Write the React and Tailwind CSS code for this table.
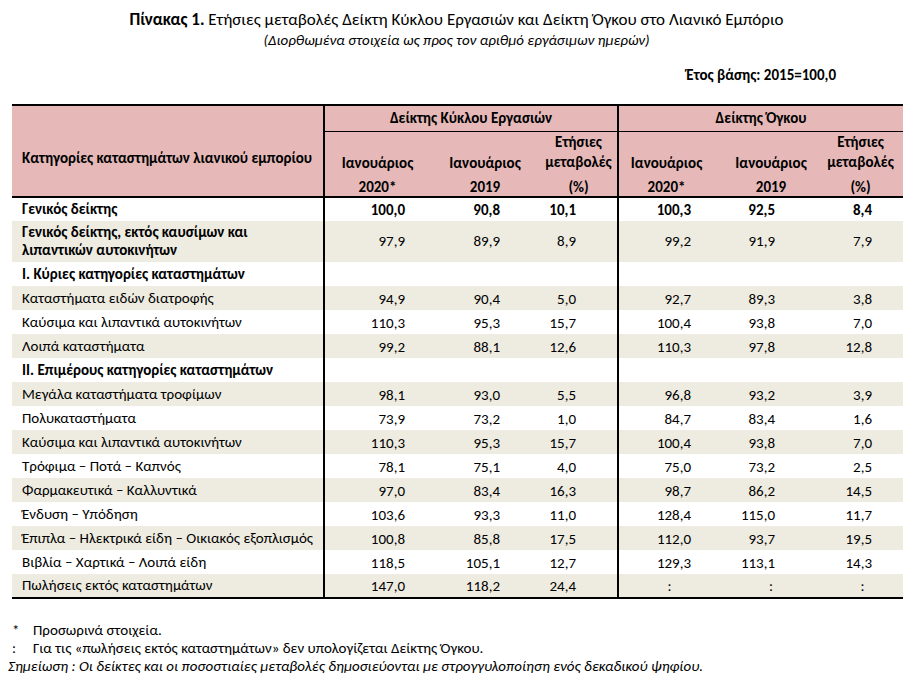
import React from "react";

const rows = [
  { label: "Γενικός δείκτης", bold: true, v: ["100,0", "90,8", "10,1", "100,3", "92,5", "8,4"] },
  {
    label: ["Γενικός δείκτης, εκτός καυσίμων και", "λιπαντικών αυτοκινήτων"],
    bold: true,
    boldValues: false,
    tall: true,
    v: ["97,9", "89,9", "8,9", "99,2", "91,9", "7,9"],
  },
  { label: "I. Κύριες κατηγορίες καταστημάτων", bold: true, v: null },
  { label: "Καταστήματα ειδών διατροφής", v: ["94,9", "90,4", "5,0", "92,7", "89,3", "3,8"] },
  { label: "Καύσιμα και λιπαντικά αυτοκινήτων", v: ["110,3", "95,3", "15,7", "100,4", "93,8", "7,0"] },
  { label: "Λοιπά καταστήματα", v: ["99,2", "88,1", "12,6", "110,3", "97,8", "12,8"] },
  { label: "II. Επιμέρους κατηγορίες καταστημάτων", bold: true, v: null },
  { label: "Μεγάλα καταστήματα τροφίμων", v: ["98,1", "93,0", "5,5", "96,8", "93,2", "3,9"] },
  { label: "Πολυκαταστήματα", v: ["73,9", "73,2", "1,0", "84,7", "83,4", "1,6"] },
  { label: "Καύσιμα και λιπαντικά αυτοκινήτων", v: ["110,3", "95,3", "15,7", "100,4", "93,8", "7,0"] },
  { label: "Τρόφιμα – Ποτά – Καπνός", v: ["78,1", "75,1", "4,0", "75,0", "73,2", "2,5"] },
  { label: "Φαρμακευτικά – Καλλυντικά", v: ["97,0", "83,4", "16,3", "98,7", "86,2", "14,5"] },
  { label: "Ένδυση – Υπόδηση", v: ["103,6", "93,3", "11,0", "128,4", "115,0", "11,7"] },
  { label: "Έπιπλα – Ηλεκτρικά είδη – Οικιακός εξοπλισμός", v: ["100,8", "85,8", "17,5", "112,0", "93,7", "19,5"] },
  { label: "Βιβλία – Χαρτικά – Λοιπά είδη", v: ["118,5", "105,1", "12,7", "129,3", "113,1", "14,3"] },
  { label: "Πωλήσεις εκτός καταστημάτων", v: ["147,0", "118,2", "24,4", ":", ":", ":"] },
];

// right padding for each value column, so numbers line up like the sheet
const valueCls = [
  "pr-[25px] border-l-2 border-black",
  "pr-[40px]",
  "pr-[41px]",
  "pr-[29px] border-l-2 border-black",
  "pr-[47px]",
  "pr-[31px]",
];

const Row = ({ row, i }) => {
  const bg = i % 2 === 1 ? "bg-[#eeece1]" : "bg-white";
  const valBold = row.bold && row.boldValues !== false;
  return (
    <tr className={`${bg} ${row.tall ? "h-[41px]" : "h-[24px]"}`}>
      <td className={`pl-[10px] align-middle ${row.bold ? "font-bold" : ""}`}>
        {Array.isArray(row.label) ? (
          <>
            {row.label[0]}
            <br />
            {row.label[1]}
          </>
        ) : (
          row.label
        )}
      </td>
      {valueCls.map((c, j) => {
        const val = row.v ? row.v[j] : "";
        const colon = val === ":";
        return (
          <td
            key={j}
            className={`${c} ${row.tall ? "align-middle" : "align-bottom pb-[2px]"} ${
              colon ? "text-center !pr-0" : "text-right"
            } ${valBold ? "font-bold" : ""}`}
          >
            {val}
          </td>
        );
      })}
    </tr>
  );
};

export default function App() {
  return (
    <div className="w-[913px] h-[685px] bg-white text-black font-[Carlito,Lato,'Noto_Sans',sans-serif] overflow-hidden">
      <div className="pt-[10px] text-center text-[17px] leading-[20px]">
        <span className="font-bold">Πίνακας 1.</span> Ετήσιες μεταβολές Δείκτη Κύκλου Εργασιών και Δείκτη Όγκου
        στο Λιανικό Εμπόριο
      </div>
      <div className="mt-[1px] text-center italic text-[15px] leading-[18px]">
        (Διορθωμένα στοιχεία ως προς τον αριθμό εργάσιμων ημερών)
      </div>
      <div className="mt-[17px] pr-[77px] text-right font-bold text-[15px] leading-[18px]">
        Έτος βάσης: 2015=100,0
      </div>

      <table className="ml-[12px] mt-[20px] w-[891px] table-fixed border-collapse text-[15px] leading-[18px] border-t-2 border-b-2 border-black">
        <colgroup>
          <col className="w-[312px]" />
          <col className="w-[106px]" />
          <col className="w-[110px]" />
          <col className="w-[78px]" />
          <col className="w-[102px]" />
          <col className="w-[102px]" />
          <col className="w-[81px]" />
        </colgroup>
        <thead className="bg-[#e6b9b8] font-bold">
          <tr className="h-[26px]">
            <td rowSpan={3} className="pl-[10px] pt-[14px] align-middle border-b-2 border-black">
              Κατηγορίες καταστημάτων λιανικού εμπορίου
            </td>
            <td colSpan={3} className="text-center align-middle border-l-2 border-b border-black">
              Δείκτης Κύκλου Εργασιών
            </td>
            <td colSpan={3} className="text-center align-middle border-l-2 border-b border-black">
              Δείκτης Όγκου
            </td>
          </tr>
          <tr className="h-[44px]">
            <td className="text-center align-bottom pb-[4px] border-l-2 border-black">Ιανουάριος</td>
            <td className="text-center align-bottom pb-[4px]">Ιανουάριος</td>
            <td className="text-center align-bottom pb-[4px] leading-[20px]">
              Ετήσιες
              <br />
              μεταβολές
            </td>
            <td className="text-center align-bottom pb-[4px] pr-[6px] border-l-2 border-black">Ιανουάριος</td>
            <td className="text-center align-bottom pb-[4px]">Ιανουάριος</td>
            <td className="text-center align-bottom pb-[4px] pr-[4px] leading-[20px] whitespace-nowrap">
              Ετήσιες
              <br />
              μεταβολές
            </td>
          </tr>
          <tr className="h-[21px]">
            <td className="text-center align-bottom border-l-2 border-b-2 border-black">2020*</td>
            <td className="text-center align-bottom border-b-2 border-black">2019</td>
            <td className="text-center align-bottom border-b-2 border-black">(%)</td>
            <td className="text-center align-bottom pr-[6px] border-l-2 border-b-2 border-black">2020*</td>
            <td className="text-center align-bottom border-b-2 border-black">2019</td>
            <td className="text-center align-bottom pr-[4px] border-b-2 border-black">(%)</td>
          </tr>
        </thead>
        <tbody>
          {rows.map((r, i) => (
            <Row key={i} row={r} i={i} />
          ))}
        </tbody>
      </table>

      <div className="mt-[22px] pl-[12px] text-[15px] leading-[18px]">
        <div className="flex">
          <span className="w-[21px]">*</span>
          <span>Προσωρινά στοιχεία.</span>
        </div>
        <div className="flex">
          <span className="w-[21px]">:</span>
          <span>Για τις «πωλήσεις εκτός καταστημάτων» δεν υπολογίζεται Δείκτης Όγκου.</span>
        </div>
        <div className="-ml-[4px] italic">
          Σημείωση : Οι δείκτες και οι ποσοστιαίες μεταβολές δημοσιεύονται με στρογγυλοποίηση ενός δεκαδικού ψηφίου.
        </div>
      </div>
    </div>
  );
}
